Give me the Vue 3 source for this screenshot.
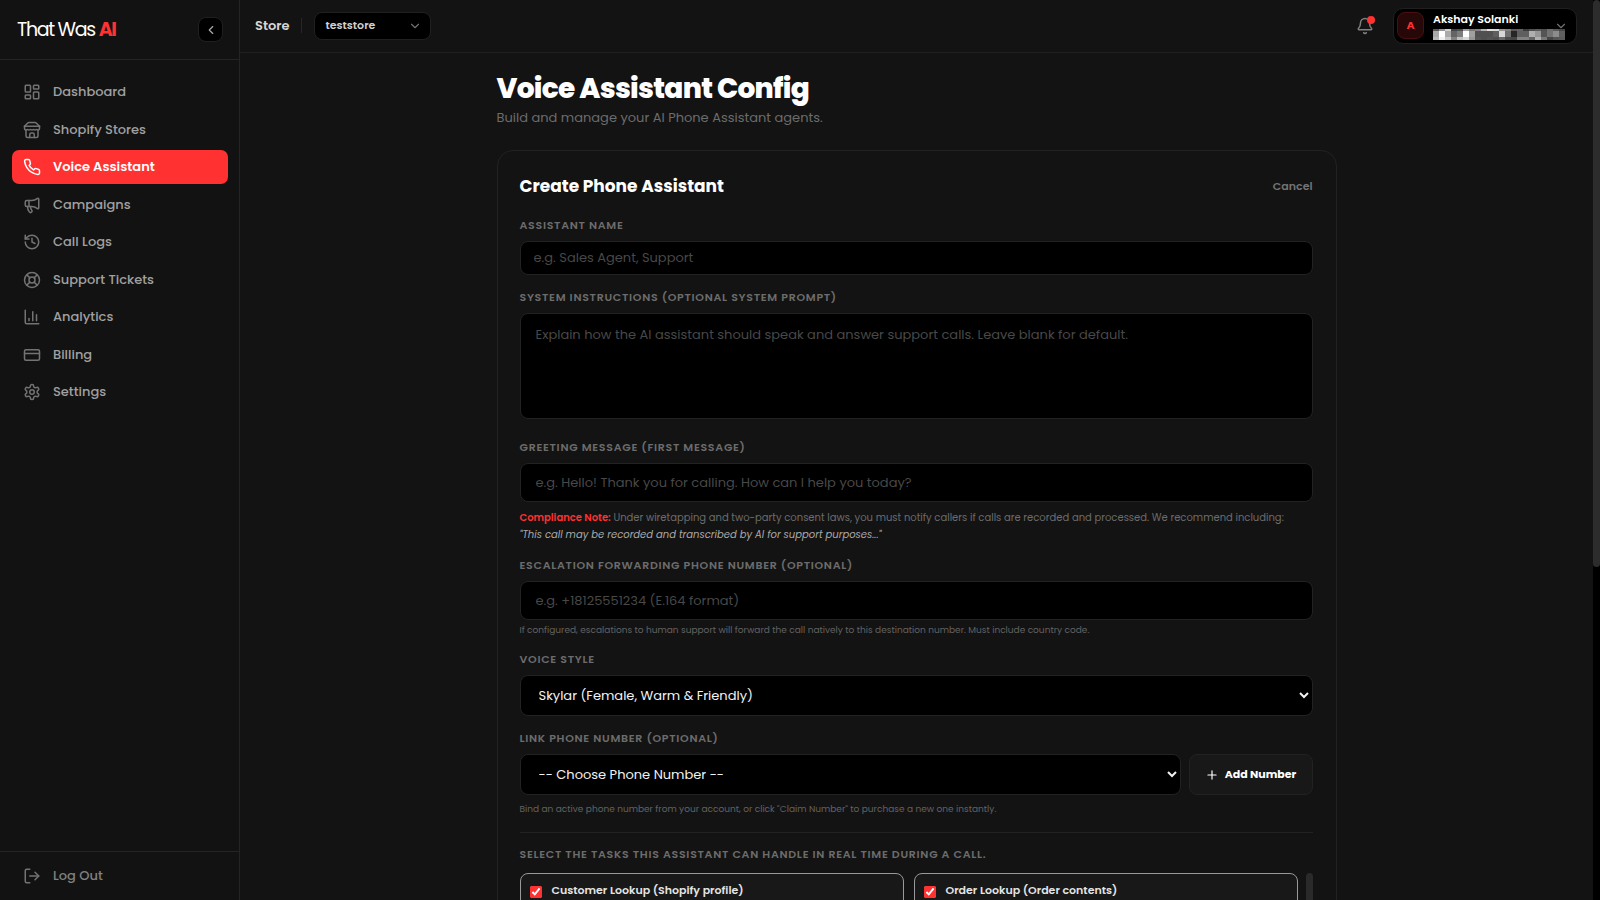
<script setup>
import { ref } from 'vue'

const nav = [
  { label: 'Dashboard', icon: '<rect width="7" height="9" x="3" y="3" rx="1"/><rect width="7" height="5" x="14" y="3" rx="1"/><rect width="7" height="9" x="14" y="12" rx="1"/><rect width="7" height="5" x="3" y="16" rx="1"/>' },
  { label: 'Shopify Stores', icon: '<path d="m2 7 4.41-4.41A2 2 0 0 1 7.83 2h8.34a2 2 0 0 1 1.42.59L22 7"/><path d="M4 12v8a2 2 0 0 0 2 2h12a2 2 0 0 0 2-2v-8"/><path d="M15 22v-4a2 2 0 0 0-2-2h-2a2 2 0 0 0-2 2v4"/><path d="M2 7h20"/><path d="M22 7v3a2 2 0 0 1-2 2a2.7 2.7 0 0 1-1.59-.63.7.7 0 0 0-.82 0A2.7 2.7 0 0 1 16 12a2.7 2.7 0 0 1-1.59-.63.7.7 0 0 0-.82 0A2.7 2.7 0 0 1 12 12a2.7 2.7 0 0 1-1.59-.63.7.7 0 0 0-.82 0A2.7 2.7 0 0 1 8 12a2.7 2.7 0 0 1-1.59-.63.7.7 0 0 0-.82 0A2.7 2.7 0 0 1 4 12a2 2 0 0 1-2-2V7"/>' },
  { label: 'Voice Assistant', active: true, icon: '<path d="M22 16.92v3a2 2 0 0 1-2.18 2 19.79 19.79 0 0 1-8.63-3.07 19.5 19.5 0 0 1-6-6 19.79 19.79 0 0 1-3.07-8.67A2 2 0 0 1 4.11 2h3a2 2 0 0 1 2 1.72 12.84 12.84 0 0 0 .7 2.81 2 2 0 0 1-.45 2.11L8.09 9.91a16 16 0 0 0 6 6l1.27-1.27a2 2 0 0 1 2.11-.45 12.84 12.84 0 0 0 2.81.7A2 2 0 0 1 22 16.92z"/>' },
  { label: 'Campaigns', icon: '<path d="M11 6a13 13 0 0 0 8.4-2.8A1 1 0 0 1 21 4v12a1 1 0 0 1-1.6.8A13 13 0 0 0 11 14H5a2 2 0 0 1-2-2V8a2 2 0 0 1 2-2z"/><path d="M6 14a12 12 0 0 0 2.4 7.2 2 2 0 0 0 3.2-2.4A8 8 0 0 1 10 14"/><path d="M8 6v8"/>' },
  { label: 'Call Logs', icon: '<path d="M3 12a9 9 0 1 0 9-9 9.75 9.75 0 0 0-6.74 2.74L3 8"/><path d="M3 3v5h5"/><path d="M12 7v5l4 2"/>' },
  { label: 'Support Tickets', icon: '<circle cx="12" cy="12" r="10"/><path d="m4.93 4.93 4.24 4.24"/><path d="m14.83 9.17 4.24-4.24"/><path d="m14.83 14.83 4.24 4.24"/><path d="m9.17 14.83-4.24 4.24"/><circle cx="12" cy="12" r="4"/>' },
  { label: 'Analytics', icon: '<path d="M3 3v16a2 2 0 0 0 2 2h16"/><path d="M18 17V9"/><path d="M13 17V5"/><path d="M8 17v-3"/>' },
  { label: 'Billing', icon: '<rect width="20" height="14" x="2" y="5" rx="2"/><path d="M2 10h20"/>' },
  { label: 'Settings', icon: '<path d="M12.22 2h-.44a2 2 0 0 0-2 2v.18a2 2 0 0 1-1 1.73l-.43.25a2 2 0 0 1-2 0l-.15-.08a2 2 0 0 0-2.73.73l-.22.38a2 2 0 0 0 .73 2.73l.15.1a2 2 0 0 1 1 1.72v.51a2 2 0 0 1-1 1.74l-.15.09a2 2 0 0 0-.73 2.73l.22.38a2 2 0 0 0 2.73.73l.15-.08a2 2 0 0 1 2 0l.43.25a2 2 0 0 1 1 1.73V20a2 2 0 0 0 2 2h.44a2 2 0 0 0 2-2v-.18a2 2 0 0 1 1-1.73l.43-.25a2 2 0 0 1 2 0l.15.08a2 2 0 0 0 2.73-.73l.22-.39a2 2 0 0 0-.73-2.73l-.15-.08a2 2 0 0 1-1-1.74v-.5a2 2 0 0 1 1-1.74l.15-.09a2 2 0 0 0 .73-2.73l-.22-.38a2 2 0 0 0-2.73-.73l-.15.08a2 2 0 0 1-2 0l-.43-.25a2 2 0 0 1-1-1.73V4a2 2 0 0 0-2-2z"/><circle cx="12" cy="12" r="3"/>' },
]

const tasks = ref([
  { id: 'customer', label: 'Customer Lookup (Shopify profile)', on: true },
  { id: 'order', label: 'Order Lookup (Order contents)', on: true },
])

// Grey levels of the obscured e-mail, one strip per entry
const mosaic = [
  { y: 0, h: 2, row: [90, 150, 210, 70, 80, 160, 120, 130, 180, 225, 215, 150, 130, 90, 100, 60, 80, 90, 80, 110, 90, 70] },
  { y: 2, h: 6, row: [170, 255, 170, 100, 125, 255, 160, 80, 80, 80, 95, 215, 110, 38, 95, 95, 175, 150, 85, 115, 140, 95] },
  { y: 8, h: 3, row: [185, 240, 200, 130, 190, 215, 150, 85, 80, 85, 80, 105, 75, 70, 130, 130, 100, 175, 120, 70, 85, 90] },
]

const name = ref('')
const prompt = ref('')
const greeting = ref('')
const forward = ref('')
</script>

<template>
  <div class="app">
    <aside class="sidebar">
      <div class="brand">
        <a href="#" class="logo">That Was <b>AI</b></a>
        <button type="button" class="collapse" aria-label="Collapse sidebar">
          <svg class="icon" width="14" height="14" viewBox="0 0 24 24"><path d="m15 18-6-6 6-6" /></svg>
        </button>
      </div>
      <nav class="nav">
        <a v-for="item in nav" :key="item.label" href="#" class="nav-item" :class="{ active: item.active }">
          <svg class="icon" width="18" height="18" viewBox="0 0 24 24" v-html="item.icon"></svg>
          <span>{{ item.label }}</span>
        </a>
      </nav>
      <div class="side-foot">
        <button type="button" class="nav-item logout">
          <svg class="icon" width="18" height="18" viewBox="0 0 24 24"><path d="M9 21H5a2 2 0 0 1-2-2V5a2 2 0 0 1 2-2h4" /><path d="m16 17 5-5-5-5" /><path d="M21 12H9" /></svg>
          <span>Log Out</span>
        </button>
      </div>
    </aside>

    <div class="main">
      <header class="topbar">
        <span class="store">Store</span>
        <span class="sep"></span>
        <button type="button" class="store-pick">
          <span>teststore</span>
          <svg class="icon" width="14" height="14" viewBox="0 0 24 24"><path d="m6 9 6 6 6-6" /></svg>
        </button>
        <button type="button" class="bell" aria-label="Notifications">
          <svg class="icon" width="18" height="18" viewBox="0 0 24 24"><path d="M10.268 21a2 2 0 0 0 3.464 0" /><path d="M3.262 15.326A1 1 0 0 0 4 17h16a1 1 0 0 0 .74-1.673C19.41 13.956 18 12.499 18 8A6 6 0 0 0 6 8c0 4.499-1.411 5.956-2.738 7.326" /></svg>
          <i class="dot"></i>
        </button>
        <button type="button" class="user">
          <span class="avatar">A</span>
          <span class="who">
            <span class="who-name">Akshay Solanki</span>
            <svg class="mosaic" width="132" height="11" viewBox="0 0 132 11" shape-rendering="crispEdges" aria-hidden="true">
              <template v-for="strip in mosaic" :key="strip.y">
                <rect v-for="(v, c) in strip.row" :key="c" :x="c * 6" :y="strip.y" width="6" :height="strip.h" :fill="`rgb(${v},${v},${v})`" />
              </template>
            </svg>
          </span>
          <svg class="icon" width="14" height="14" viewBox="0 0 24 24"><path d="m6 9 6 6 6-6" /></svg>
        </button>
      </header>

      <main class="scroll">
        <div class="content">
          <h1>Voice Assistant Config</h1>
          <p class="sub">Build and manage your AI Phone Assistant agents.</p>

          <form class="card" @submit.prevent>
            <div class="card-head">
              <h2>Create Phone Assistant</h2>
              <button type="button" class="cancel">Cancel</button>
            </div>

            <div class="field">
              <label for="name">Assistant Name</label>
              <input id="name" v-model="name" class="short" type="text" placeholder="e.g. Sales Agent, Support">
            </div>

            <div class="field">
              <label for="prompt">System Instructions (Optional System Prompt)</label>
              <textarea id="prompt" v-model="prompt" placeholder="Explain how the AI assistant should speak and answer support calls. Leave blank for default."></textarea>
            </div>

            <div class="field">
              <label for="greeting">Greeting Message (First Message)</label>
              <input id="greeting" v-model="greeting" type="text" placeholder="e.g. Hello! Thank you for calling. How can I help you today?">
              <p class="note"><strong>Compliance Note:</strong> Under wiretapping and two-party consent laws, you must notify callers if calls are recorded and processed. We recommend including: <em>"This call may be recorded and transcribed by AI for support purposes..."</em></p>
            </div>

            <div class="field">
              <label for="forward">Escalation Forwarding Phone Number (Optional)</label>
              <input id="forward" v-model="forward" type="tel" placeholder="e.g. +18125551234 (E.164 format)">
              <p class="hint">If configured, escalations to human support will forward the call natively to this destination number. Must include country code.</p>
            </div>

            <div class="field">
              <label for="voice">Voice Style</label>
              <select id="voice"><option>Skylar (Female, Warm &amp; Friendly)</option></select>
            </div>

            <div class="field">
              <label for="phone">Link Phone Number (Optional)</label>
              <div class="row">
                <select id="phone"><option>-- Choose Phone Number --</option></select>
                <button type="button" class="add">
                  <svg class="icon" width="14" height="14" viewBox="0 0 24 24"><path d="M5 12h14" /><path d="M12 5v14" /></svg>
                  <span>Add Number</span>
                </button>
              </div>
              <p class="hint far">Bind an active phone number from your account, or click "Claim Number" to purchase a new one instantly.</p>
            </div>

            <fieldset class="tasks">
              <legend>Select the tasks this assistant can handle in real time during a call.</legend>
              <div class="task-scroll">
                <div class="task-grid">
                  <label v-for="t in tasks" :key="t.id" class="task">
                    <input v-model="t.on" type="checkbox">
                    <span>{{ t.label }}</span>
                  </label>
                </div>
                <div class="task-bar"></div>
              </div>
            </fieldset>
          </form>
        </div>
      </main>
    </div>
    <div class="track"><div class="thumb"></div></div>
  </div>
</template>

<style>
html, body { background: #000; }
</style>

<style scoped>
* { box-sizing: border-box; }
.app {
  display: flex;
  height: 100vh;
  overflow: hidden;
  background: #131313;
  color: #fff;
  font-family: Poppins, Inter, "Open Sans", sans-serif;
  font-size: 13px;
}
button, input, select, textarea { font: inherit; color: inherit; }
button { cursor: pointer; }
a { color: inherit; text-decoration: none; }
h1, h2, p { margin: 0; }
.icon { fill: none; stroke: currentColor; stroke-width: 2; stroke-linecap: round; stroke-linejoin: round; flex: none; }

.sidebar { flex: none; width: 240px; display: flex; flex-direction: column; border-right: 1px solid #242424; background: #121212; }
.brand { display: flex; align-items: center; justify-content: space-between; height: 60px; padding: 0 16px 0 17px; border-bottom: 1px solid #242424; }
.logo { font-size: 19px; letter-spacing: -0.07em; line-height: 30px; }
.logo b { color: #ff3131; font-weight: 700; }
.collapse { display: grid; place-items: center; width: 25px; height: 25px; padding: 0; border: 1px solid #202020; border-radius: 8px; background: #000; color: #aaa; }
.nav { display: grid; align-content: space-between; height: 334px; margin: 15px 11px 0 12px; }
.nav-item { display: flex; align-items: center; gap: 12px; height: 34px; padding: 0 11px; border: 0; border-radius: 7px; background: none; color: #a0a0a0; font-weight: 500; }
.nav-item .icon { color: #737373; }
.nav-item.active { background: #ff3131; color: #fff; font-weight: 600; }
.nav-item.active .icon { color: #fff; }
.side-foot { margin-top: auto; height: 49px; padding: 7px 11px 0 12px; border-top: 1px solid #242424; }
.nav-item.logout { color: #808080; }

.main { flex: 1; min-width: 0; display: flex; flex-direction: column; }
.topbar { flex: none; display: flex; align-items: center; height: 53px; padding: 0 16px 1px 15px; border-bottom: 1px solid #202020; }
.store { font-weight: 600; color: #d6d6d6; }
.sep { width: 1px; height: 15px; margin: 0 12px 0 11px; background: #262626; }
.store-pick { display: flex; align-items: center; justify-content: space-between; width: 117px; height: 28px; padding: 0 8px 0 11px; border: 1px solid #202020; border-radius: 8px; background: #000; color: #d0d0d0; font-size: 11px; font-weight: 600; }
.store-pick .icon, .user .icon { color: #707070; }
.bell { position: relative; display: grid; place-items: center; width: 34px; height: 34px; margin-left: auto; margin-right: 11px; padding: 0; border: 0; background: none; color: #808080; }
.dot { position: absolute; top: 7px; right: 7px; width: 8px; height: 8px; border-radius: 50%; background: #ff3131; }
.user { display: flex; align-items: center; gap: 9px; width: 184px; height: 36px; padding: 0 8px 0 3px; border: 1px solid #202020; border-radius: 10px; background: #000; text-align: left; }
.avatar { display: grid; place-items: center; width: 27px; height: 27px; border: 1px solid #4a1010; border-radius: 8px; background: #260808; color: #ff3131; font-size: 11px; font-weight: 700; }
.who { flex: 1; width: 0; display: flex; flex-direction: column; }
.who-name { height: 18px; line-height: 16px; font-size: 11px; font-weight: 600; white-space: nowrap; }
.mosaic { display: block; overflow: visible; }

.scroll { flex: 1; overflow-y: auto; scrollbar-width: none; }
.content { max-width: 840px; margin: 0 auto; padding: 16px 0; }
h1 { font-size: 28px; line-height: 40px; font-weight: 800; letter-spacing: -0.025em; }
.sub { line-height: 18px; margin-bottom: 23px; color: #6c6c6c; }
.card { padding: 21px 23px 21px 22px; border: 1px solid #222; border-radius: 16px; }
.card-head { display: flex; align-items: center; justify-content: space-between; height: 28px; margin-bottom: 17px; }
h2 { font-size: 17px; font-weight: 700; }
.cancel { padding: 0; border: 0; background: none; color: #737373; font-size: 11px; font-weight: 600; }
.field { margin-bottom: 14px; }
.field > label, legend { display: block; padding: 0; margin-bottom: 8px; color: #6c6c6c; font-size: 11px; line-height: 16px; font-weight: 600; letter-spacing: 0.065em; text-transform: uppercase; }
.field input, .field textarea, .field select { display: block; width: 100%; border: 1px solid #222; border-radius: 8px; background: #000; outline: none; }
.field input { height: 39px; padding: 0 15px; }
.field input.short { height: 34px; padding: 0 13px; }
.field textarea { height: 106px; margin-bottom: 20px; padding: 12px 15px; line-height: 18px; resize: none; }
.field select { height: 41px; padding: 0 0 0 14px; color: #f2f2f2; }
::placeholder { color: #484848; opacity: 1; }
.note { margin-top: 7px; color: #6c6c6c; font-size: 10px; line-height: 17px; }
.note strong { color: #ff3131; font-weight: 600; }
.note em { display: block; color: #aaa; }
.hint { margin-top: 3px; color: #626262; font-size: 9px; line-height: 14px; }
.hint.far { margin-top: 7px; }
.row { display: flex; gap: 8px; }
.field .row select { flex: 1; width: 0; }
.add { display: flex; align-items: center; justify-content: center; gap: 6px; width: 124px; border: 1px solid #222; border-radius: 8px; background: #181818; font-size: 11px; font-weight: 700; }
.tasks { margin: 16px 0 0; padding: 13px 0 0; border: 0; border-top: 1px solid #222; }
legend { float: left; width: 100%; margin-bottom: 11px; }
.task-scroll { clear: both; display: flex; gap: 8px; }
.task-grid { flex: 1; display: grid; grid-template-columns: 1fr 1fr; gap: 10px; }
.task { display: flex; gap: 10px; height: 62px; padding: 8px 9px; border: 1px solid #999; border-radius: 8px; background: #181818; color: #e4e4e4; font-size: 11px; line-height: 16px; font-weight: 600; }
.task input { width: 12px; height: 12px; margin: 4px 0 0; accent-color: #ff3131; }
.task-bar { width: 7px; border-radius: 4px; background: #2a2a2a; }

.track { flex: none; width: 7px; background: #000; }
.thumb { height: 63%; border-radius: 4px; background: #2c2c2c; }
</style>
